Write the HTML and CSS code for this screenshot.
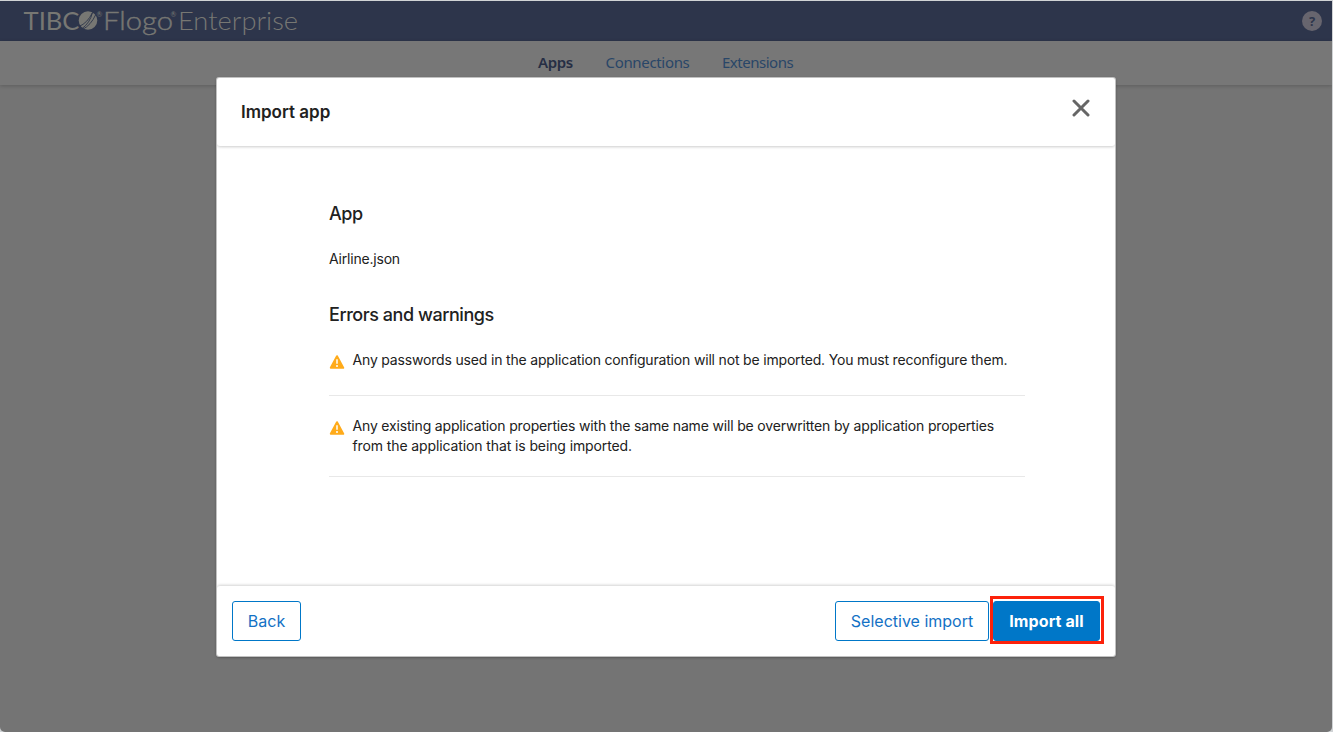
FILE: index.html
```html
<!DOCTYPE html>
<html lang="en">
<head>
<meta charset="utf-8">
<title>TIBCO Flogo Enterprise</title>
<link rel="stylesheet" href="styles.css">
</head>
<body>
<div class="window">
  <header class="topbar">
    <svg class="logo" width="300" height="40" viewBox="0 0 300 40" role="img" aria-label="TIBCO Flogo Enterprise">
      <g class="logo-text">
        <text class="regular" x="23.5" y="29" textLength="56" lengthAdjust="spacingAndGlyphs">TIBC</text>
        <text class="mark" x="96.500" y="15.500">®</text>
        <text class="light" x="103" y="29" textLength="70" lengthAdjust="spacingAndGlyphs">Flogo</text>
        <text class="mark" x="170.500" y="15.500">®</text>
        <text class="thin" x="178" y="29" textLength="120" lengthAdjust="spacingAndGlyphs">Enterprise</text>
      </g>
      <circle class="logo-disc" cx="88" cy="19.500" r="9.3"/>
      <path class="logo-rays" d="M79 25.500Q87.500 22 92.500 11.500Q90 22 81.500 28M82.500 28.500Q91 24 95.500 14"/>
    </svg>
    <svg class="help" width="20" height="20" viewBox="0 0 20 20" role="img" aria-label="Help">
      <circle class="help-disc" cx="10" cy="10" r="10"/>
      <text class="help-mark" x="10" y="14.500" text-anchor="middle">?</text>
    </svg>
  </header>
  <nav class="tabs">
    <a class="tab active">Apps</a>
    <a class="tab connections">Connections</a>
    <a class="tab extensions">Extensions</a>
  </nav>
  <main class="workspace"></main>
</div>
<section class="dialog" role="dialog" aria-label="Import app">
  <header class="dialog-head">
    <h1 class="dialog-title">Import app</h1>
    <svg class="close" width="18" height="18" viewBox="0 0 18 18"><path d="M2 2L16 16M16 2L2 16"/></svg>
  </header>
  <div class="dialog-body">
    <h2 class="section-title app">App</h2>
    <p class="file-name">Airline.json</p>
    <h2 class="section-title errors">Errors and warnings</h2>
    <div class="warning">
      <svg class="warning-icon" width="16" height="14" viewBox="0 0 16 14"><path class="triangle" d="M8 1.200L14.200 12.800H1.800Z"/><path class="bang" d="M8 4.300V8.700M8 10V11.900"/></svg>
      <p class="warning-text first">Any passwords used in the application configuration will not be imported. You must reconfigure them.</p>
    </div>
    <div class="warning tall">
      <svg class="warning-icon" width="16" height="14" viewBox="0 0 16 14"><path class="triangle" d="M8 1.200L14.200 12.800H1.800Z"/><path class="bang" d="M8 4.300V8.700M8 10V11.900"/></svg>
      <p class="warning-text">Any existing application properties with the same name will be overwritten by application properties<br><span class="last-line">from the application that is being imported.</span></p>
    </div>
  </div>
  <footer class="dialog-foot">
    <button class="button back">Back</button>
    <button class="button selective">Selective import</button>
    <span class="highlight"><button class="button primary">Import all</button></span>
  </footer>
</section>
</body>
</html>
```

FILE: styles.css
```css
* { box-sizing: border-box; }
body { margin: 0; height: 732px; overflow: hidden; background: #d0d3d5; font-family: Inter, "Liberation Sans", sans-serif; color: #212121; }
h1, h2, p { margin: 0; }

.window { display: flex; flex-direction: column; width: 1332px; height: 732px; padding-top: 1px; background: #747474; background-clip: content-box; border-radius: 0 0 5px 5px; overflow: hidden; }
.topbar { display: flex; justify-content: space-between; height: 40px; padding: 0 10px 0 0; background: #2d354b; }
.logo-text { fill: #777773; font-family: Lato, sans-serif; font-size: 25px; }
.logo-text .regular { font-weight: 400; }
.logo-text .light { font-weight: 300; stroke: #777773; stroke-width: .4; }
.logo-text .thin { font-weight: 300; }
.logo-text .mark { font-size: 7px; }
.logo-disc { fill: #777773; }
.logo-rays { fill: none; stroke: #2d354b; stroke-width: .9; }
.help { margin-top: 10px; }
.help-disc { fill: #67656e; }
.help-mark { fill: #2d354b; font: 700 13px "Noto Sans", sans-serif; }

.tabs { display: flex; height: 44px; padding: 11px 0 0 538px; background: #777; box-shadow: 0 1px 4px rgba(0, 0, 0, .2); z-index: 1; }
.tab { font: 400 15px/21px "Noto Sans", sans-serif; color: #294668; white-space: nowrap; letter-spacing: -.35px; }
.tab.active { width: 67.5px; font-weight: 600; color: #262e44; }
.tab.connections { width: 116.5px; letter-spacing: -.33px; }
.tab.extensions { letter-spacing: -.48px; }
.workspace { flex: 1; }

.dialog { position: absolute; z-index: 2; left: 217px; top: 78px; display: flex; flex-direction: column; width: 898px; height: 578px; background: #fff; border-radius: 2px; box-shadow: 0 0 0 1px #c1c1c1, 0 1px 3px rgba(0, 0, 0, .5); overflow: hidden; }
.dialog-head { display: flex; justify-content: space-between; height: 68px; padding: 21px 25px 0 24px; border-radius: 3px; box-shadow: 0 1px 3px rgba(0, 0, 0, .2); }
.dialog-title { font-size: 17px; line-height: 26px; font-weight: 600; }
.close { fill: none; stroke: #666; stroke-width: 3; stroke-linecap: round; }
.dialog-body { flex: 1; padding: 55px 90px 0 112px; }
.section-title { font-size: 18px; line-height: 26px; font-weight: 500; letter-spacing: -.45px; }
.file-name { margin-top: 22px; font-size: 14px; line-height: 20px; letter-spacing: -.2px; }
.section-title.errors { margin-top: 33px; }
.warning { display: flex; gap: 7.5px; height: 68px; padding-top: 22px; border-bottom: 1px solid #e8e8e8; }
.warning.tall { height: 81px; padding-top: 20px; }
.warning-icon { flex: none; margin-top: 5px; }
.warning-text { font-size: 14px; line-height: 20px; letter-spacing: -.17px; white-space: nowrap; }
.warning-text.first { letter-spacing: -.175px; }
.last-line { letter-spacing: -.11px; }
.triangle { fill: #ffab1a; stroke: #ffab1a; stroke-width: 2; stroke-linejoin: round; }
.bang { fill: none; stroke: #fff1d8; stroke-width: 1.8; }

.dialog-foot { display: flex; height: 70px; padding: 15px 11px 0 15px; border-radius: 3px; box-shadow: 0 -1px 3px rgba(0, 0, 0, .18); }
.button { height: 40px; padding: 0; border: 1px solid #0077c8; border-radius: 3px; background: #fff; color: #1371c5; font: 400 16px/20px Inter, sans-serif; white-space: nowrap; }
.back { width: 69px; }
.selective { width: 154px; margin-left: auto; }
.highlight { display: flex; width: 114px; height: 48px; margin: -5px 0 0 1px; padding: 2px 0; border: 3px solid #fc220b; }
.primary { width: 107px; background: #0077c8; color: #fff; font-weight: 700; letter-spacing: .1px; }
```
